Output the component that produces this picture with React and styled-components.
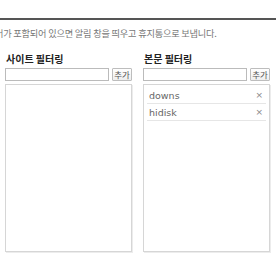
import React from "react";
import styled, { createGlobalStyle } from "styled-components";

const Global = createGlobalStyle`
  html, body { margin: 0; padding: 0; background: #fff; }
  body { font-family: "Noto Sans CJK KR", "Noto Sans", sans-serif; overflow: hidden; }
  * { box-sizing: border-box; }
`;

const Page = styled.div`
  width: 276px;
  height: 260px;
  padding-top: 18px;
  overflow: hidden;
`;

const Rule = styled.div`
  height: 2px;
  background: #555;
`;

const Desc = styled.p`
  margin: 7px 0 0 -5px;
  font-size: 9.2px;
  line-height: 12px;
  color: #777;
  white-space: nowrap;
  letter-spacing: -0.2px;
`;

const Columns = styled.div`
  display: grid;
  grid-template-columns: 127px 127px;
  column-gap: 11px;
  padding-left: 5px;
  margin-top: 13px;
`;

const Column = styled.section`
  display: flex;
  flex-direction: column;
`;

const Heading = styled.h3`
  margin: 0 0 3px 1px;
  font-size: 10px;
  line-height: 13px;
  font-weight: 700;
  color: #222;
`;

const AddRow = styled.div`
  display: flex;
  gap: 3px;
  align-items: stretch;
  height: 13px;
`;

const Input = styled.input`
  flex: 1;
  min-width: 0;
  height: 13px;
  border: 1px solid #bbb;
  padding: 0 2px;
  margin: 0;
  font-size: 10px;
  outline: none;
`;

const AddButton = styled.button`
  width: 20px;
  height: 13px;
  padding: 0;
  margin: 0;
  border: 1px solid #bdbdbd;
  border-radius: 1px;
  background: linear-gradient(#fff, #eee);
  font-family: inherit;
  font-size: 8.5px;
  line-height: 11px;
  color: #555;
`;

const ListBox = styled.ul`
  list-style: none;
  margin: 3px 0 0;
  padding: 2px 3px;
  height: 168px;
  border: 1px solid #d6d6d6;
  box-shadow: 1px 1px 0 #ececec;
`;

const Item = styled.li`
  display: flex;
  justify-content: space-between;
  align-items: center;
  height: 17px;
  padding: 0 3px 0 2px;
  border-bottom: 1px solid #e6e6e6;
  font-family: "DejaVu Sans", "Noto Sans", sans-serif;
  font-size: 9.5px;
  color: #666;
`;

const Remove = styled.span`
  font-size: 9px;
  color: #888;
`;

function FilterColumn({ title, items }) {
  return (
    <Column>
      <Heading>{title}</Heading>
      <AddRow>
        <Input type="text" />
        <AddButton>추가</AddButton>
      </AddRow>
      <ListBox>
        {items.map((t) => (
          <Item key={t}>
            {t}
            <Remove>×</Remove>
          </Item>
        ))}
      </ListBox>
    </Column>
  );
}

export default function App() {
  return (
    <Page>
      <Global />
      <Rule />
      <Desc>어가 포함되어 있으면 알림 창을 띄우고 휴지통으로 보냅니다.</Desc>
      <Columns>
        <FilterColumn title="사이트 필터링" items={[]} />
        <FilterColumn title="본문 필터링" items={["downs", "hidisk"]} />
      </Columns>
    </Page>
  );
}
